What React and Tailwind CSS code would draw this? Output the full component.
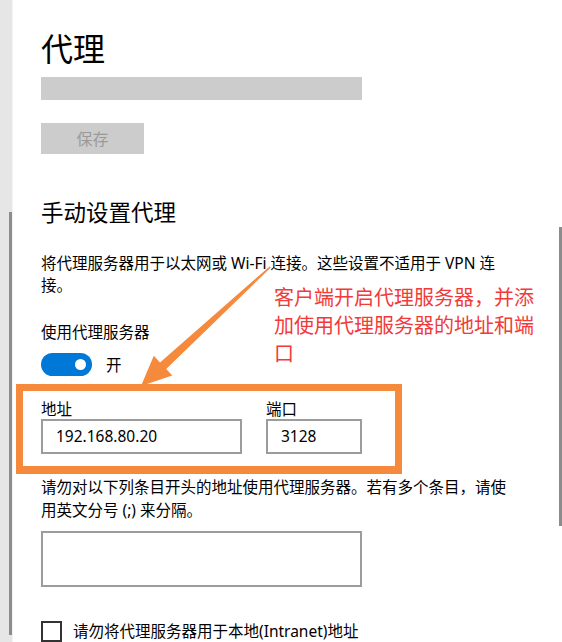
import React from "react";

export default function App() {
  return (
    <div className="relative w-[562px] h-[642px] overflow-hidden bg-white flex font-['Noto_Sans','Noto_Sans_CJK_SC',sans-serif] text-black">
      {/* left strip with scrollbar */}
      <div className="w-[13px] h-full shrink-0 bg-[#e6e6e6] border-r border-[#f2f2f2] pt-[212px]">
        <div className="ml-[9px] w-[3px] h-[423px] bg-[#8c8c8c]" />
      </div>

      {/* main content */}
      <div className="flex-1 pl-[28px] pt-[29px] flex flex-col items-start">
        <h1 className="text-[32px] leading-[40px] font-normal">代理</h1>
        <div className="mt-[8px] w-[321px] h-[27px] bg-[#cccccc]" />
        <button className="mt-[23px] w-[103px] h-[36px] bg-[#cccccc] text-[#9a9a9a] text-[16px] leading-none flex items-center justify-center">
          保存
        </button>

        <h2 className="mt-[44px] text-[22.5px] leading-[30px] font-normal">手动设置代理</h2>

        <p className="mt-[24px] text-[15.5px] leading-[22px] whitespace-nowrap">
          将代理服务器用于以太网或 Wi-Fi 连接。这些设置不适用于 VPN 连
          <br />
          接。
        </p>

        <div className="mt-[25px] text-[15.5px] leading-[22px]">使用代理服务器</div>

        <div className="mt-[10px] flex items-center gap-[14px]">
          <div className="w-[51px] h-[23px] rounded-full bg-[#0078d7] flex items-center justify-end pr-[6px]">
            <div className="w-[11px] h-[11px] rounded-full bg-white" />
          </div>
          <span className="text-[15.5px] leading-[22px]">开</span>
        </div>

        {/* highlighted fields */}
        <div className="mt-[8px] -ml-[25px] w-[386px] border-[7px] border-b-[8px] border-[#f58a3c] pl-[18px] pt-[8px] pb-[12px] flex gap-[24px]">
          <div className="flex flex-col w-[201px]">
            <span className="text-[15.5px] leading-[20px]">地址</span>
            <div className="h-[35px] border-2 border-[#9c9c9c] flex items-center pl-[13px] text-[15.5px]">
              192.168.80.20
            </div>
          </div>
          <div className="flex flex-col w-[96px]">
            <span className="text-[15.5px] leading-[20px]">端口</span>
            <div className="h-[35px] border-2 border-[#9c9c9c] flex items-center pl-[13px] text-[15.5px]">
              3128
            </div>
          </div>
        </div>

        <p className="mt-[2px] text-[15.5px] leading-[23px] whitespace-nowrap">
          请勿对以下列条目开头的地址使用代理服务器。若有多个条目，请使
          <br />
          用英文分号 (;) 来分隔。
        </p>

        <div className="mt-[9px] w-[321px] h-[64px] border-2 border-[#9c9c9c]" />

        <div className="mt-[33px] flex items-center gap-[11px]">
          <div className="w-[21px] h-[21px] border-2 border-[#333333] shrink-0" />
          <span className="text-[15.5px] leading-[22px] whitespace-nowrap">请勿将代理服务器用于本地(Intranet)地址</span>
        </div>
      </div>

      {/* right scrollbar */}
      <div className="absolute left-[559px] top-[227px] w-[3px] h-[299px] bg-[#8c8c8c]" />

      {/* annotation text */}
      <div className="absolute left-[274px] top-[284px] text-[20px] leading-[28px] text-[#f23a3a] whitespace-nowrap">
        客户端开启代理服务器，并添
        <br />
        加使用代理服务器的地址和端
        <br />
        口
      </div>

      {/* annotation arrow */}
      <svg className="absolute left-0 top-0" width="562" height="642" viewBox="0 0 562 642">
        <polygon
          points="270.8,267.6 166.2,368.9 172.3,375.6 141,386 153.8,355.8 160,362.5 269.6,266.4"
          fill="#f58a3c"
        />
      </svg>
    </div>
  );
}
